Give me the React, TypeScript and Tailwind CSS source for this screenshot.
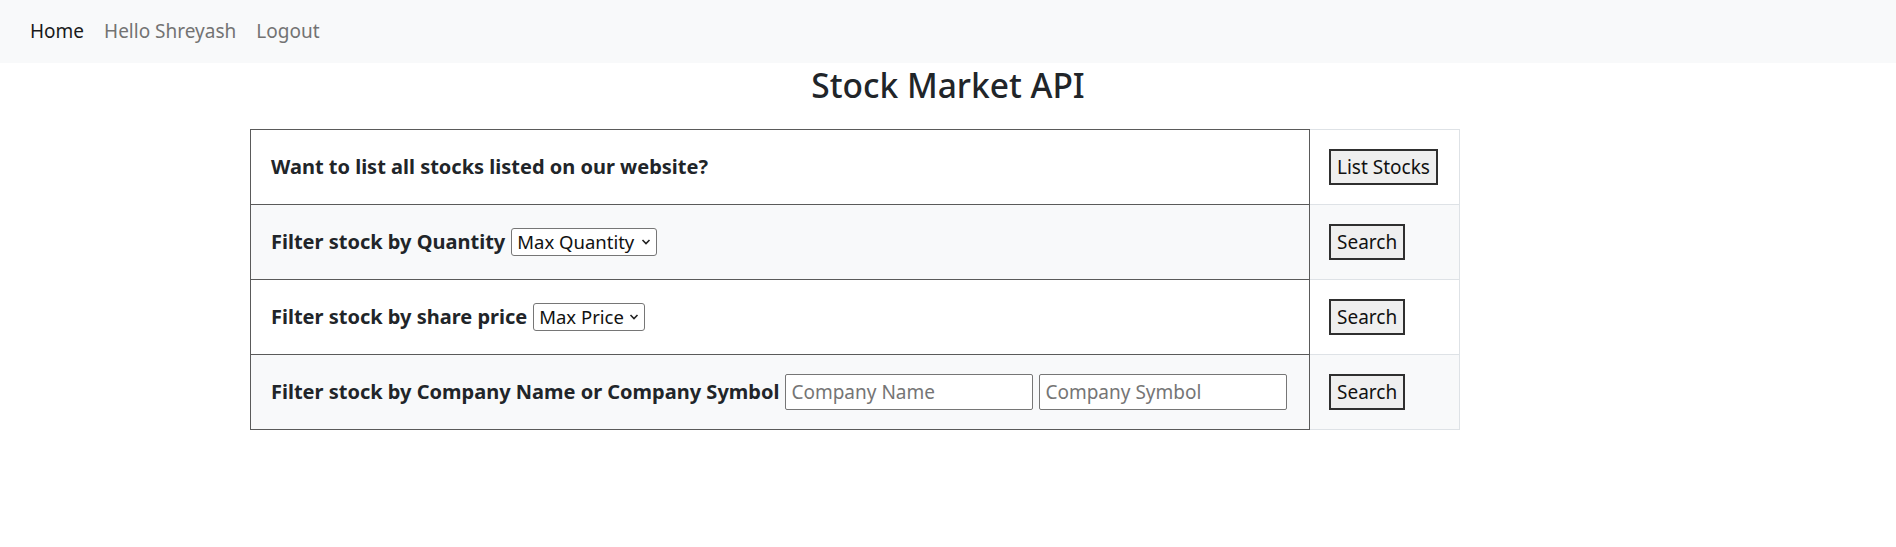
import React from 'react';

const font = { fontFamily: '"Noto Sans", "Open Sans", sans-serif' };

const Chevron: React.FC = () => (
  <svg
    className="pointer-events-none absolute right-[6px] top-1/2 -translate-y-1/2"
    width="10"
    height="7"
    viewBox="0 0 10 7"
    fill="none"
  >
    <path d="M1.5 1.5 L5 5 L8.5 1.5" stroke="#222" strokeWidth="1.6" />
  </svg>
);

const FakeSelect: React.FC<{ label: string; width: string }> = ({ label, width }) => (
  <span className={`relative inline-flex items-center ${width}`}>
    <select className="h-[28px] w-full appearance-none rounded-[3px] border border-[#767676] bg-white pl-[5px] pr-[16px] text-[18.5px] leading-[26px] text-[#111]">
      <option>{label}</option>
    </select>
    <Chevron />
  </span>
);

const ActionButton: React.FC<{ label: string }> = ({ label }) => (
  <button className="h-[36px] whitespace-nowrap border-2 border-[#2f2f2f] bg-[#efefef] px-[6px] text-[19px] leading-[30px] text-[#111]">
    {label}
  </button>
);

interface Row {
  content: React.ReactNode;
  action: string;
}

export default function App() {
  const rows: Row[] = [
    {
      content: <b className="font-bold">Want to list all stocks listed on our website?</b>,
      action: 'List Stocks',
    },
    {
      content: (
        <>
          <b className="font-bold">Filter stock by Quantity</b>
          <FakeSelect label="Max Quantity" width="w-[146px]" />
        </>
      ),
      action: 'Search',
    },
    {
      content: (
        <>
          <b className="font-bold">Filter stock by share price</b>
          <FakeSelect label="Max Price" width="w-[112px]" />
        </>
      ),
      action: 'Search',
    },
    {
      content: (
        <>
          <b className="font-bold">Filter stock by Company Name or Company Symbol</b>
          <input
            placeholder="Company Name"
            className="h-[36px] w-[248px] rounded-[2px] border border-[#767676] bg-white px-[5px] text-[19px] placeholder:text-[#757575]"
          />
          <input
            placeholder="Company Symbol"
            className="h-[36px] w-[248px] rounded-[2px] border border-[#767676] bg-white px-[5px] text-[19px] placeholder:text-[#757575]"
          />
        </>
      ),
      action: 'Search',
    },
  ];

  return (
    <div className="min-h-[547px] bg-white text-[#212529]" style={font}>
      <nav className="flex h-[63px] items-center gap-[20px] bg-[#f8f9fa] px-[30px] text-[19px]">
        <a className="text-[#1a1a1a]">Home</a>
        <a className="text-[#737373]">Hello Shreyash</a>
        <a className="text-[#737373]">Logout</a>
      </nav>

      <h2 className="mb-[22px] text-center text-[33.5px] font-medium leading-[44px]">Stock Market API</h2>

      <div className="ml-[250px] w-[1210px]">
        <table className="w-full border-collapse">
          <tbody>
            {rows.map((row, i) => (
              <tr key={i} className={i % 2 === 1 ? 'bg-[#f8f9fa]' : 'bg-white'}>
                <td className="h-[75px] w-[1059px] border border-[#5a5a5a] px-[20px]">
                  <div className="flex items-center gap-[6px] text-[20px]">{row.content}</div>
                </td>
                <td className="border border-[#dee2e6] px-[19px]">
                  <ActionButton label={row.action} />
                </td>
              </tr>
            ))}
          </tbody>
        </table>
      </div>
    </div>
  );
}
